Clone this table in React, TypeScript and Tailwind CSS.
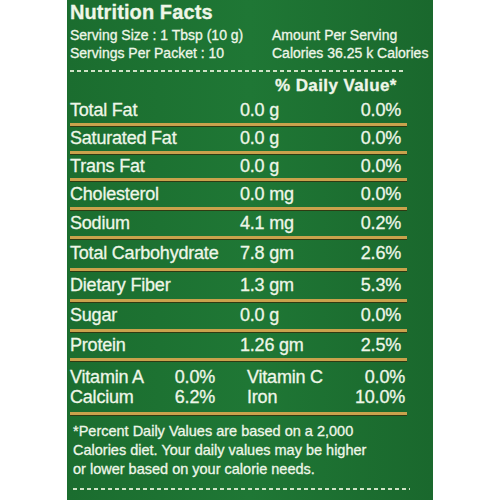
const rows = [
  { name: "Total Fat", amount: "0.0 g", pct: "0.0%", h: "h-[26px]" },
  { name: "Saturated Fat", amount: "0.0 g", pct: "0.0%", h: "h-[25px]" },
  { name: "Trans Fat", amount: "0.0 g", pct: "0.0%", h: "h-[24px]" },
  { name: "Cholesterol", amount: "0.0 mg", pct: "0.0%", h: "h-[26px]" },
  { name: "Sodium", amount: "4.1 mg", pct: "0.2%", h: "h-[26px]" },
  { name: "Total Carbohydrate", amount: "7.8 gm", pct: "2.6%", h: "h-[29px]" },
  { name: "Dietary Fiber", amount: "1.3 gm", pct: "5.3%", h: "h-[28px]" },
  { name: "Sugar", amount: "0.0 g", pct: "0.0%", h: "h-[27px]" },
  { name: "Protein", amount: "1.26 gm", pct: "2.5%", h: "h-[26px]" },
];

const GoldLine = () => (
  <div className="h-[3px] bg-[#c9a24c] shadow-[0_1px_0_#2f3a12]" />
);

const Dashed = () => (
  <div className="h-[2px] bg-[repeating-linear-gradient(90deg,#cfe2c6_0_4px,transparent_4px_7px)]" />
);

export default function App() {
  return (
    <div className="w-[500px] h-[500px] bg-white flex overflow-hidden font-['Liberation_Sans',Arial,sans-serif]">
      <div className="ml-[67px] w-[366px] h-full bg-[linear-gradient(90deg,#1b6d2f,#1f7735_50%,#1a682d)] text-[#eef6e8] pl-[3px] [-webkit-text-stroke:0.3px_#eef6e8]">
        {/* header */}
        <div className="h-[24px] flex items-center text-[20px] font-bold leading-none tracking-[0.1px]">
          Nutrition Facts
        </div>
        <div className="mt-[2px] flex text-[14px] leading-[18px]">
          <div className="w-[202px]">
            <div>Serving Size : 1 Tbsp (10 g)</div>
            <div>Servings Per Packet : 10</div>
          </div>
          <div>
            <div>Amount Per Serving</div>
            <div>Calories 36.25 k Calories</div>
          </div>
        </div>
        <div className="mt-[8px] w-[333px]">
          <Dashed />
        </div>
        <div className="h-[25px] flex items-center pl-[205px] pt-[2px] text-[17px] font-bold tracking-[0.4px]">
          % Daily Value*
        </div>

        {/* rows */}
        <div className="w-[337px] text-[18px] tracking-[-0.2px]">
          {rows.map((r) => (
            <div key={r.name}>
              <div className={`${r.h} flex items-center pr-[6px]`}>
                <div className="w-[170px]">{r.name}</div>
                <div className="flex-1">{r.amount}</div>
                <div>{r.pct}</div>
              </div>
              <GoldLine />
            </div>
          ))}
          <div className="h-[51px] flex items-center pr-[2px] leading-[20px]">
            <div className="w-[145px] grid grid-cols-[1fr_auto]">
              <div>Vitamin A</div>
              <div className="text-right">0.0%</div>
              <div>Calcium</div>
              <div className="text-right">6.2%</div>
            </div>
            <div className="ml-[32px] flex-1 grid grid-cols-[1fr_auto]">
              <div>Vitamin C</div>
              <div className="text-right">0.0%</div>
              <div>Iron</div>
              <div className="text-right">10.0%</div>
            </div>
          </div>
          <GoldLine />
        </div>

        {/* footnote */}
        <div className="mt-[7px] pl-[3px] text-[14.5px] leading-[19px]">
          <div>*Percent Daily Values are based on a 2,000</div>
          <div>Calories diet. Your daily values may be higher</div>
          <div>or lower based on your calorie needs.</div>
        </div>
        <div className="mt-[9px] ml-[3px] w-[337px]">
          <Dashed />
        </div>
      </div>
    </div>
  );
}
